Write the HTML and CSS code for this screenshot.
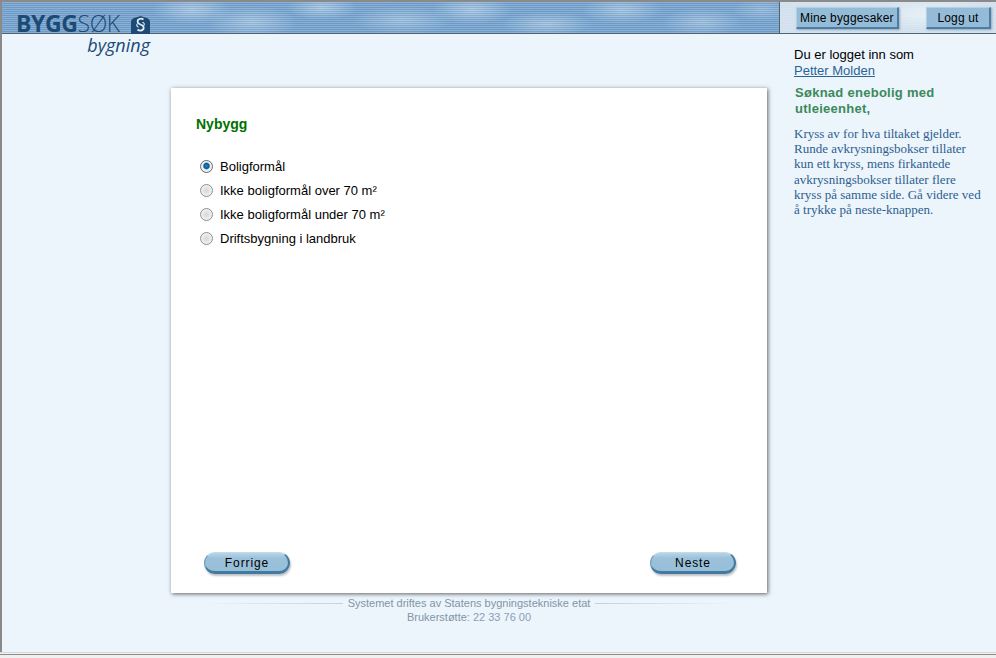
FILE: index.html
```html
<!DOCTYPE html>
<html lang="en">
<head>
    <meta charset="UTF-8" />
    <title>ByggSøk bygning</title>
    <link rel="stylesheet" href="styles.css">
</head>
<body>
    <div class="page">
        <header class="topbar">
            <div class="banner"></div>
            <div class="actions">
                <a class="top-btn" href="#">Mine byggesaker</a>
                <a class="top-btn" href="#">Logg ut</a>
            </div>
        </header>

        <a class="logo" href="#">
            <span class="logo-name"><b>BYGG</b>SØK</span>
            <svg class="logo-mark" width="19" height="18" viewBox="0 0 19 18">
                <path d="M0 18V6Q0 3 3 2L6.500 1 9.500 0 12.500 1 16 2Q19 3 19 6V18Z" fill="#1c4a75" />
                <path d="M12.500 3.500Q9.500 1.500 7 4 5.500 7 9.500 8.500 13.500 10 12.500 13 9.500 16 6.500 13.500" fill="none" stroke="#dfeaf4" stroke-width="1.800" />
                <path d="M6.500 7.500Q4.500 10 7.500 11.200M12.500 10Q14.500 7.500 11.500 6.300" fill="none" stroke="#dfeaf4" stroke-width="1.100" />
            </svg>
            <span class="logo-sub">bygning</span>
        </a>

        <div class="content">
            <main class="card-col">
                <section class="card">
                    <h1>Nybygg</h1>
                    <ul class="options">
                        <li><span class="radio checked"></span>Boligformål</li>
                        <li><span class="radio"></span>Ikke boligformål over 70 m²</li>
                        <li><span class="radio"></span>Ikke boligformål under 70 m²</li>
                        <li><span class="radio"></span>Driftsbygning i landbruk</li>
                    </ul>
                    <div class="nav-row">
                        <button class="pill">Forrige</button>
                        <button class="pill">Neste</button>
                    </div>
                </section>
                <footer class="credits">
                    <div class="credits-line"><span class="rule"></span>Systemet driftes av Statens bygningstekniske etat<span class="rule rule-right"></span></div>
                    <div>Brukerstøtte: <span class="phone">22 33 76 00</span></div>
                </footer>
            </main>

            <aside class="sidebar">
                <p class="user">Du er logget inn som<br><a href="#">Petter Molden</a></p>
                <h2>Søknad enebolig med utleieenhet,</h2>
                <p class="help">Kryss av for hva tiltaket gjelder. Runde avkrysningsbokser tillater kun ett kryss, mens firkantede avkrysningsbokser tillater flere kryss på samme side. Gå videre ved å trykke på neste-knappen.</p>
            </aside>
        </div>

        <div class="statusbar"></div>
    </div>
</body>
</html>
```

FILE: styles.css
```css
html, body {
    margin: 0;
    padding: 0;
    height: 100%;
}

body {
    font-family: "Liberation Sans", Arial, sans-serif;
    font-size: 13px;
    color: #000;
    background-color: #ecf4fc;
    overflow: hidden;
}

.page {
    position: relative;
    height: 100%;
    box-sizing: border-box;
    border-top: 2px solid #8a8a8a;
    border-left: 2px solid #8a8a8a;
    display: flex;
    flex-direction: column;
}

/* Top bar */
.topbar {
    height: 31px;
    flex: none;
    display: flex;
    border-bottom: 1px solid #4f6272;
}

.banner {
    width: 777px;
    border-right: 1px solid #4f6272;
    background-color: #74a2cd;
    background-image:
        repeating-linear-gradient(180deg, rgba(255, 255, 255, 0.16) 0 1px, rgba(0, 40, 90, 0.07) 1px 2px),
        radial-gradient(ellipse 40px 14px at 190px 8px, rgba(215, 232, 246, 0.5), transparent),
        radial-gradient(ellipse 45px 16px at 250px 20px, rgba(215, 232, 246, 0.45), transparent),
        radial-gradient(ellipse 35px 12px at 320px 6px, rgba(215, 232, 246, 0.5), transparent),
        radial-gradient(ellipse 50px 14px at 400px 18px, rgba(215, 232, 246, 0.4), transparent),
        radial-gradient(ellipse 40px 14px at 470px 8px, rgba(215, 232, 246, 0.5), transparent),
        radial-gradient(ellipse 45px 12px at 545px 22px, rgba(215, 232, 246, 0.45), transparent),
        radial-gradient(ellipse 40px 14px at 620px 8px, rgba(215, 232, 246, 0.45), transparent),
        radial-gradient(ellipse 40px 14px at 700px 20px, rgba(215, 232, 246, 0.4), transparent),
        radial-gradient(ellipse 30px 12px at 760px 8px, rgba(215, 232, 246, 0.3), transparent);
}

.actions {
    flex: 1;
    display: flex;
    justify-content: space-between;
    align-items: flex-start;
    padding: 5px 5px 0 16px;
    background-color: #d0e0ed;
    background-image:
        repeating-linear-gradient(180deg, rgba(255, 255, 255, 0.14) 0 1px, transparent 1px 2px),
        radial-gradient(ellipse 60px 16px at 150px 12px, rgba(240, 247, 252, 0.7), transparent);
}

.top-btn {
    height: 19px;
    line-height: 20px;
    padding: 0 3px;
    min-width: 56px;
    font-size: 12px;
    text-align: center;
    color: #000;
    letter-spacing: 0.15px;
    text-decoration: none;
    background-color: #94bcd8;
    border-top: 1px solid #b5d0e3;
    border-left: 1px solid #b5d0e3;
    border-right: 2px solid #4a80a8;
    border-bottom: 2px solid #4a80a8;
    box-shadow: 1px 1px 2px rgba(90, 110, 130, 0.5);
}

/* Logo sits over the bar edge */
.logo {
    position: absolute;
    left: 14px;
    top: 9px;
    width: 134px;
    height: 46px;
    color: #1c4a75;
    text-decoration: none;
}

.logo-name {
    position: absolute;
    left: 0;
    top: 1px;
    font-family: "Open Sans", sans-serif;
    font-size: 23px;
    line-height: 22px;
    letter-spacing: -0.4px;
    font-weight: 300;
}

.logo-name b {
    font-weight: 700;
}

.logo-mark {
    position: absolute;
    right: 0;
    top: 5px;
}

.logo-sub {
    position: absolute;
    right: 0;
    top: 24px;
    font-family: "Open Sans", sans-serif;
    font-style: italic;
    font-size: 18px;
    line-height: 20px;
}

/* Main area */
.content {
    flex: 1;
    display: flex;
    min-height: 0;
    padding-left: 169px;
}

.card-col {
    width: 596px;
    padding-top: 54px;
}

.card {
    height: 505px;
    box-sizing: border-box;
    padding: 28px 31px 19px 25px;
    background-color: #fff;
    box-shadow: 1px 1px 4px rgba(50, 50, 50, 0.75);
    display: flex;
    flex-direction: column;
}

h1 {
    margin: 0 0 22px;
    font-size: 14px;
    line-height: 16px;
    color: #007000;
}

.options {
    list-style: none;
    margin: 0;
    padding: 0 0 0 4px;
    flex: 1;
}

.options li {
    height: 24px;
    display: flex;
    align-items: center;
}

.radio {
    width: 11px;
    height: 11px;
    margin-right: 7px;
    border: 1px solid #8f8f8f;
    border-radius: 50%;
    background: radial-gradient(circle at 50% 50%, #d8d8d8 0, #ececec 60%, #f6f6f6 100%);
    box-shadow: inset 0 0 0 1px #f0f0f0;
}

.radio.checked {
    background: radial-gradient(circle at 50% 45%, #1e86c8 0, #0a5a94 32%, #f0f0f0 48%, #e6e6e6 100%);
    border-color: #5f6b75;
}

.nav-row {
    display: flex;
    justify-content: space-between;
    padding-left: 8px;
}

.pill {
    width: 86px;
    height: 22px;
    padding: 1px 0 0 1px;
    box-sizing: border-box;
    font-family: inherit;
    font-size: 12px;
    letter-spacing: 0.9px;
    color: #000;
    background: linear-gradient(180deg, #b9d4e6 0, #9ac0da 30%, #98bfd9 100%);
    border: none;
    border-top: 1px solid #c4dbea;
    border-bottom: 3px solid #44799f;
    border-right: 2px solid #44799f;
    border-left: 1px solid #6b9cc0;
    border-radius: 11px;
    box-shadow: 1px 2px 2px rgba(110, 120, 130, 0.45);
}

.credits {
    margin-top: 3px;
    text-align: center;
    font-size: 11px;
    line-height: 14px;
    color: #8294a6;
}

.credits-line {
    display: flex;
    align-items: center;
    justify-content: center;
}

.rule {
    flex: 1;
    height: 1px;
    margin: 0 5px 0 30px;
    background: linear-gradient(90deg, transparent, #c3d1de);
}

.rule-right {
    margin: 0 30px 0 5px;
    background: linear-gradient(90deg, #c3d1de, transparent);
}

.phone {
    color: #8aa0b8;
}

/* Right column */
.sidebar {
    width: 190px;
    margin-left: 27px;
    padding-top: 13px;
}

.user {
    margin: 0;
    line-height: 16px;
}

.user a {
    color: #2a6496;
}

h2 {
    margin: 6px 0 0 1px;
    font-size: 13px;
    line-height: 16px;
    letter-spacing: 0.27px;
    color: #3a8a5a;
}

.help {
    margin: 9px 0 0;
    font-family: "Liberation Serif", serif;
    font-size: 13px;
    line-height: 15.2px;
    color: #2c5f8f;
}

/* Bottom edge of the window */
.statusbar {
    flex: none;
    height: 5px;
    margin-left: -2px;
    border-top: 1px solid #d8d8d8;
    background: linear-gradient(180deg, #f2f2f2 0 1px, #8c8c8c 1px 2px, #f0f0f0 2px);
}
```
